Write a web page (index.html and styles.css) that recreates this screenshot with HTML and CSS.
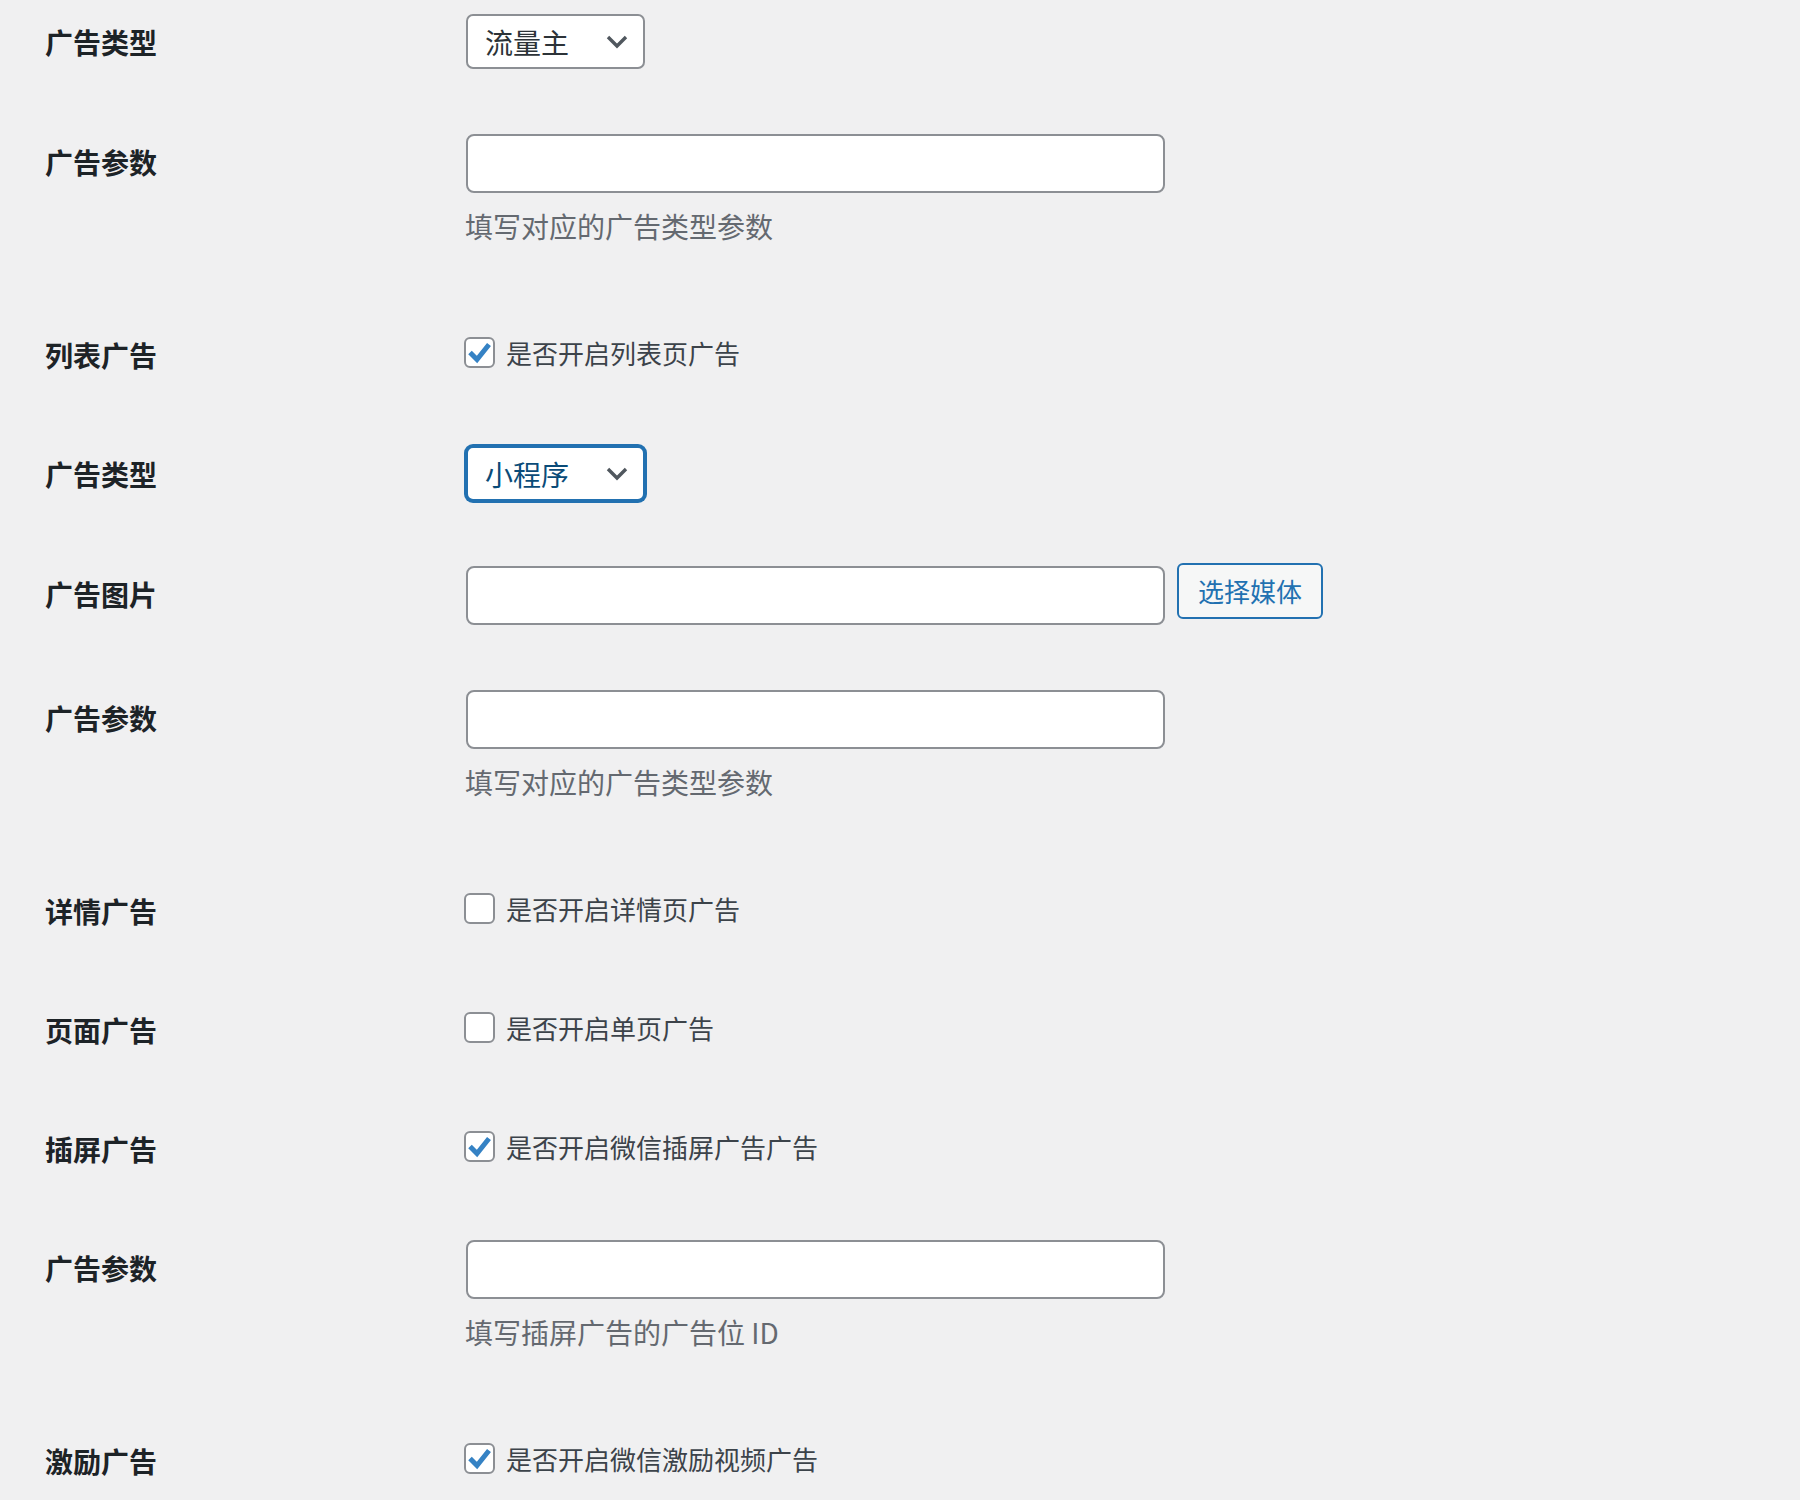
FILE: index.html
```html
<!DOCTYPE html>
<html lang="zh-CN">
<head>
<meta charset="utf-8">
<title>广告设置</title>
<link rel="stylesheet" href="styles.css">
</head>
<body>
<div class="form">

  <div class="row">
    <div class="th">广告类型</div>
    <div class="td">
      <div class="select">
        <span class="select-text">流量主</span>
        <svg class="chev" width="22" height="14" viewBox="0 0 22 14"><polyline points="2,2 11,11 20,2" fill="none" stroke="#50575e" stroke-width="3.4"/></svg>
      </div>
    </div>
  </div>

  <div class="row">
    <div class="th">广告参数</div>
    <div class="td">
      <div class="input"></div>
      <p class="desc">填写对应的广告类型参数</p>
    </div>
  </div>

  <div class="row">
    <div class="th">列表广告</div>
    <div class="td">
      <label class="check-line">
        <span class="cb checked"><svg width="31" height="31" viewBox="0 0 31 31"><polyline points="6,15.5 13,22.5 25,7.5" fill="none" stroke="#3582c4" stroke-width="5"/></svg></span>
        <span class="cb-text">是否开启列表页广告</span>
      </label>
    </div>
  </div>

  <div class="row">
    <div class="th">广告类型</div>
    <div class="td">
      <div class="select focus">
        <span class="select-text">小程序</span>
        <svg class="chev" width="22" height="14" viewBox="0 0 22 14"><polyline points="2,2 11,11 20,2" fill="none" stroke="#50575e" stroke-width="3.4"/></svg>
      </div>
    </div>
  </div>

  <div class="row">
    <div class="th">广告图片</div>
    <div class="td inline">
      <div class="input"></div>
      <div class="button">选择媒体</div>
    </div>
  </div>

  <div class="row">
    <div class="th">广告参数</div>
    <div class="td">
      <div class="input"></div>
      <p class="desc">填写对应的广告类型参数</p>
    </div>
  </div>

  <div class="row">
    <div class="th">详情广告</div>
    <div class="td">
      <label class="check-line">
        <span class="cb"></span>
        <span class="cb-text">是否开启详情页广告</span>
      </label>
    </div>
  </div>

  <div class="row">
    <div class="th">页面广告</div>
    <div class="td">
      <label class="check-line">
        <span class="cb"></span>
        <span class="cb-text">是否开启单页广告</span>
      </label>
    </div>
  </div>

  <div class="row">
    <div class="th">插屏广告</div>
    <div class="td">
      <label class="check-line">
        <span class="cb checked"><svg width="31" height="31" viewBox="0 0 31 31"><polyline points="6,15.5 13,22.5 25,7.5" fill="none" stroke="#3582c4" stroke-width="5"/></svg></span>
        <span class="cb-text">是否开启微信插屏广告广告</span>
      </label>
    </div>
  </div>

  <div class="row">
    <div class="th">广告参数</div>
    <div class="td">
      <div class="input"></div>
      <p class="desc">填写插屏广告的广告位 ID</p>
    </div>
  </div>

  <div class="row">
    <div class="th">激励广告</div>
    <div class="td">
      <label class="check-line">
        <span class="cb checked"><svg width="31" height="31" viewBox="0 0 31 31"><polyline points="6,15.5 13,22.5 25,7.5" fill="none" stroke="#3582c4" stroke-width="5"/></svg></span>
        <span class="cb-text">是否开启微信激励视频广告</span>
      </label>
    </div>
  </div>

</div>
</body>
</html>
```

FILE: styles.css
```css
html, body {
  margin: 0;
  padding: 0;
  background: #f0f0f1;
}

body {
  font-family: "Noto Sans CJK SC", "Noto Sans", "Liberation Sans", sans-serif;
  color: #3c434a;
  font-size: 28px;
}

.form {
  padding-left: 45px;
}

.row {
  display: flex;
  align-items: flex-start;
  padding: 14px 0 51px;
}

.th {
  width: 421px;
  flex: none;
  margin-top: 8px;
  line-height: 40px;
  font-size: 28px;
  font-weight: 700;
  color: #1d2327;
}

.td {
  flex: none;
}

.td.inline {
  display: flex;
  align-items: flex-start;
}

.select {
  box-sizing: border-box;
  width: 179px;
  height: 55px;
  border: 2px solid #8c8f94;
  border-radius: 7px;
  background: #fff;
  display: flex;
  align-items: center;
  justify-content: space-between;
  padding: 0 15px 0 17px;
  color: #2c3338;
}

.select-text {
  line-height: 40px;
  font-size: 28px;
}

.select.focus {
  border-color: #2271b1;
  box-shadow: 0 0 0 2px #2271b1;
  color: #0a4b78;
}

.chev {
  display: block;
  margin-top: 1px;
}

.input {
  box-sizing: border-box;
  width: 699px;
  height: 59px;
  border: 2px solid #8c8f94;
  border-radius: 8px;
  background: #fff;
}

.button {
  box-sizing: border-box;
  margin-left: 12px;
  margin-top: -3px;
  height: 56px;
  width: 146px;
  border: 2px solid #2271b1;
  border-radius: 6px;
  background: #f6f7f7;
  color: #2271b1;
  font-size: 26px;
  line-height: 52px;
  text-align: center;
}

.desc {
  margin: 13px 0 16px -1px;
  line-height: 40px;
  font-size: 28px;
  color: #646970;
}

.check-line {
  display: flex;
  align-items: center;
  gap: 11px;
  margin: 10px 0 13px -2px;
  height: 31px;
}

.cb {
  box-sizing: border-box;
  width: 31px;
  height: 31px;
  border: 2px solid #8c8f94;
  border-radius: 6px;
  background: #fff;
  position: relative;
  flex: none;
}

.cb svg {
  position: absolute;
  left: -2px;
  top: -2px;
}

.cb-text {
  line-height: 31px;
  font-size: 26px;
  color: #3c434a;
}
```
